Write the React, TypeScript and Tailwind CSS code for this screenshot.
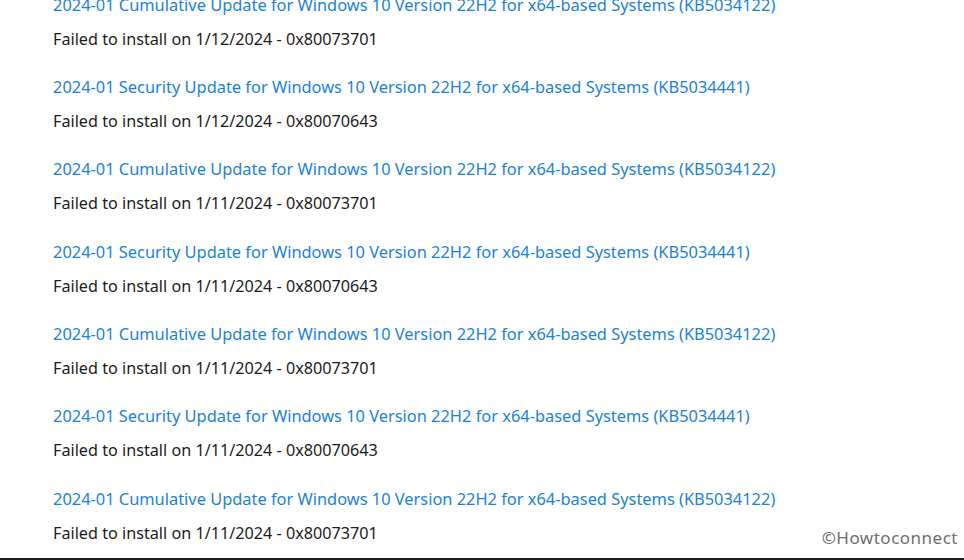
const updates = [
  { kind: "Cumulative", kb: "KB5034122", date: "1/12/2024", code: "0x80073701" },
  { kind: "Security", kb: "KB5034441", date: "1/12/2024", code: "0x80070643" },
  { kind: "Cumulative", kb: "KB5034122", date: "1/11/2024", code: "0x80073701" },
  { kind: "Security", kb: "KB5034441", date: "1/11/2024", code: "0x80070643" },
  { kind: "Cumulative", kb: "KB5034122", date: "1/11/2024", code: "0x80073701" },
  { kind: "Security", kb: "KB5034441", date: "1/11/2024", code: "0x80070643" },
  { kind: "Cumulative", kb: "KB5034122", date: "1/11/2024", code: "0x80073701" },
];

const App = () => {
  return (
    <div className="relative h-[560px] w-[964px] overflow-hidden bg-white border-b-2 border-[#1c1c1c] font-['Noto_Sans',sans-serif]">
      <ul className="-mt-[7.5px] pl-[53px]">
        {updates.map((u, i) => (
          <li key={i} className="pb-[24.4px]">
            <a className="block h-6 leading-6 text-[16.4px] text-[#1a82d8] whitespace-nowrap">
              2024-01 {u.kind} Update for Windows 10 Version 22H2 for x64-based Systems ({u.kb})
            </a>
            <p className="mt-[10px] h-6 leading-6 text-[16.2px] text-[#1b1b1b] whitespace-nowrap">
              Failed to install on {u.date} - {u.code}
            </p>
          </li>
        ))}
      </ul>

      <div className="absolute right-[6px] bottom-[8px] text-[17px] leading-6 text-[#6e6e6e] tracking-[0.5px]">
        ©Howtoconnect
      </div>
    </div>
  );
};

export default App;
